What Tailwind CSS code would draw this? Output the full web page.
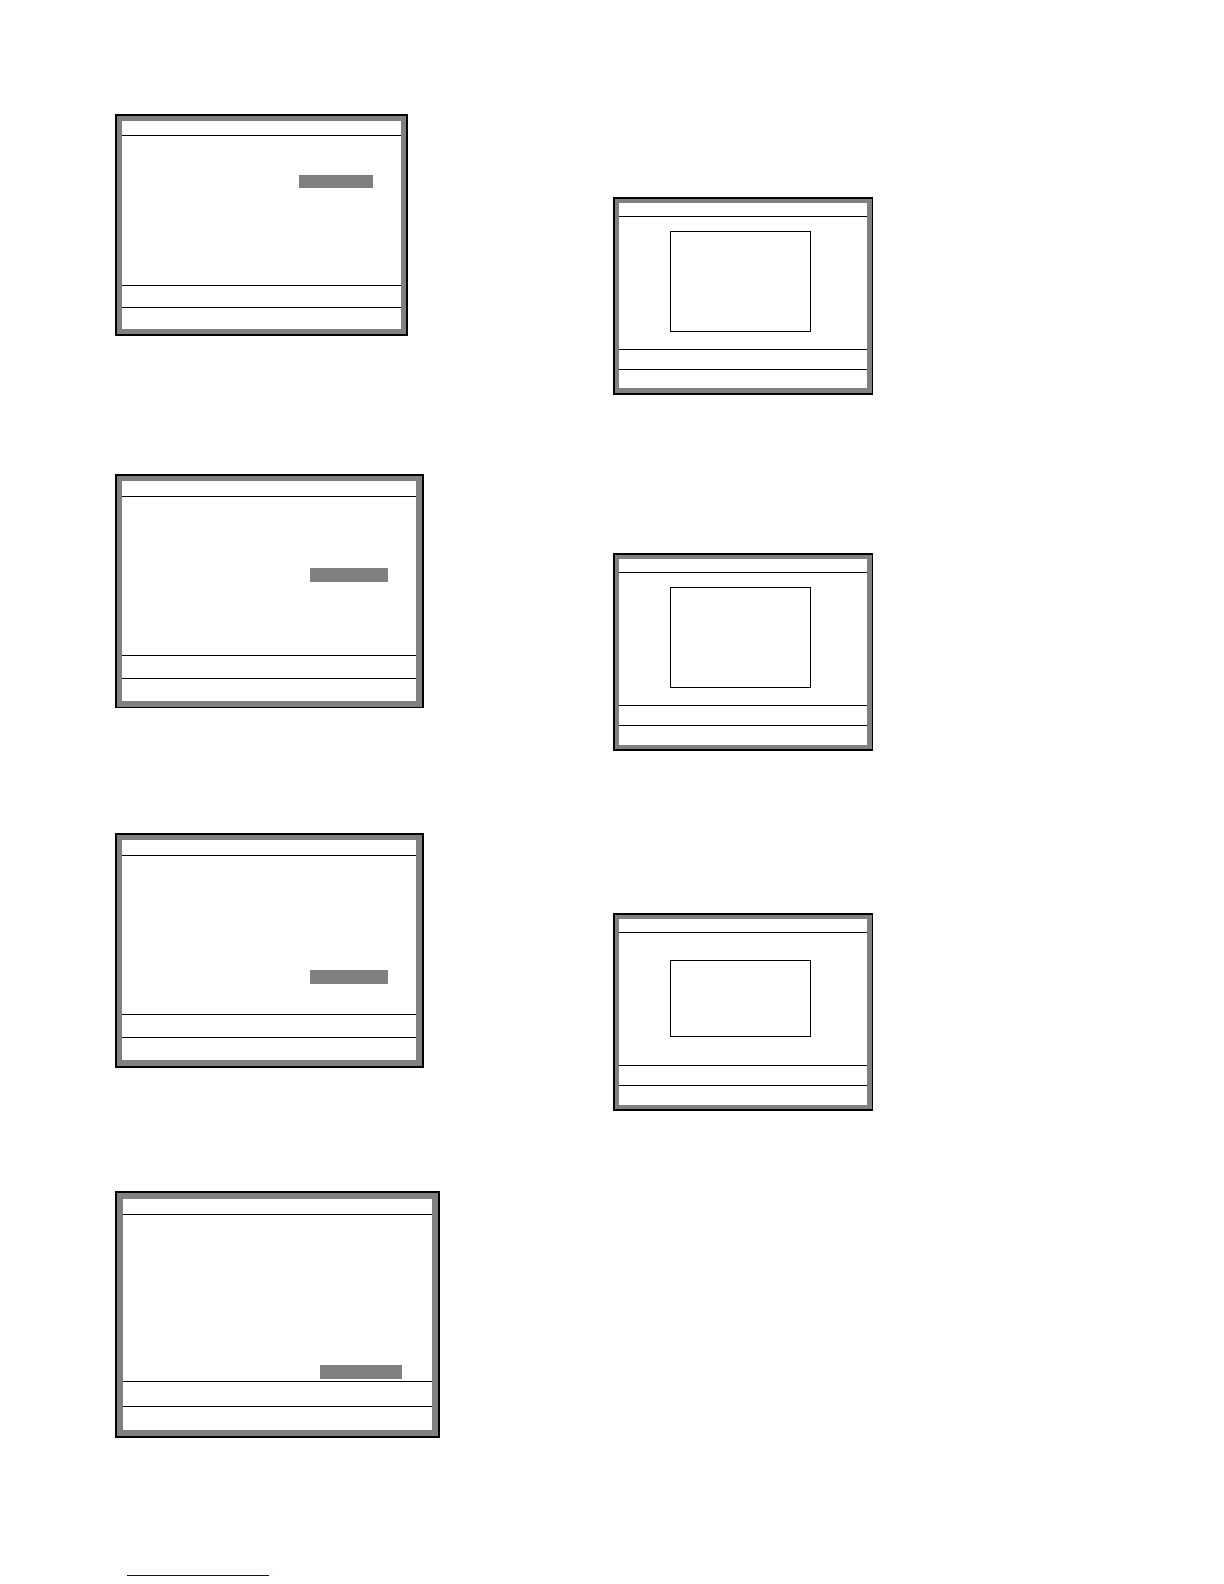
<!DOCTYPE html>
<html lang="en">
<head>
    <meta charset="UTF-8">
    <meta name="viewport" content="width=device-width, initial-scale=1.0">
    <title>Menu screens</title>
    <script src="https://cdn.jsdelivr.net/npm/@tailwindcss/browser@4"></script>
</head>
<body class="bg-white">
    <main class="grid grid-cols-2 items-start pt-[114px] pl-[115px] pr-[113px]">
        <!-- Menus with a highlighted entry -->
        <div class="flex flex-col">
            <section class="w-full max-w-[293px] border-2 border-black bg-[#808080] p-[5px]">
                <div class="bg-white divide-y divide-black">
                    <div class="h-[15px]"></div>
                    <div class="h-[150px] flex justify-end items-start pt-[39px] pr-7">
                        <div class="w-[74px] h-[13px] bg-[#808080]"></div>
                    </div>
                    <div class="h-[22px]"></div>
                    <div class="h-[21px]"></div>
                </div>
            </section>

            <section class="mt-[138px] w-full max-w-[309px] border-2 border-b border-black bg-[#808080] pt-[5px] pl-[5px] pr-[6px] pb-[6px]">
                <div class="bg-white divide-y divide-black">
                    <div class="h-4"></div>
                    <div class="h-[159px] flex justify-end items-start pt-[71px] pr-7">
                        <div class="w-[78px] h-[14px] bg-[#808080]"></div>
                    </div>
                    <div class="h-[23px]"></div>
                    <div class="h-[22px]"></div>
                </div>
            </section>

            <section class="mt-[125px] w-full max-w-[309px] border-2 border-black bg-[#808080] pt-[5px] pl-[5px] pr-[6px] pb-[6px]">
                <div class="bg-white divide-y divide-black">
                    <div class="h-4"></div>
                    <div class="h-[159px] flex justify-end items-start pt-[114px] pr-7">
                        <div class="w-[78px] h-[14px] bg-[#808080]"></div>
                    </div>
                    <div class="h-[23px]"></div>
                    <div class="h-[22px]"></div>
                </div>
            </section>

            <section class="mt-[123px] w-full max-w-[325px] border-2 border-black bg-[#808080] p-[6px]">
                <div class="bg-white divide-y divide-black">
                    <div class="h-4"></div>
                    <div class="h-[167px] flex justify-end items-start pt-[150px] pr-[30px]">
                        <div class="w-[82px] h-[14px] bg-[#808080]"></div>
                    </div>
                    <div class="h-[25px]"></div>
                    <div class="h-[23px]"></div>
                </div>
            </section>
        </div>

        <!-- Screens with a message box -->
        <div class="flex flex-col pt-[83px]">
            <section class="w-full max-w-[260px] border-2 border-r border-black bg-[#808080] pt-1 pl-1 pr-[5px] pb-[5px]">
                <div class="bg-white divide-y divide-black">
                    <div class="h-[14px]"></div>
                    <div class="h-[133px] pt-[14px] pl-[51px] pr-14">
                        <div class="h-[101px] border border-black"></div>
                    </div>
                    <div class="h-5"></div>
                    <div class="h-[18px]"></div>
                </div>
            </section>

            <section class="mt-[158px] w-full max-w-[260px] border-2 border-r border-black bg-[#808080] pt-1 pl-1 pr-[5px] pb-1">
                <div class="bg-white divide-y divide-black">
                    <div class="h-[14px]"></div>
                    <div class="h-[133px] pt-[14px] pl-[51px] pr-14">
                        <div class="h-[101px] border border-black"></div>
                    </div>
                    <div class="h-5"></div>
                    <div class="h-[19px]"></div>
                </div>
            </section>

            <section class="mt-[162px] w-full max-w-[260px] border-2 border-r border-black bg-[#808080] pt-1 pl-1 pr-[5px] pb-1">
                <div class="bg-white divide-y divide-black">
                    <div class="h-[14px]"></div>
                    <div class="h-[133px] pt-[27px] pl-[51px] pr-14">
                        <div class="h-[77px] border border-black"></div>
                    </div>
                    <div class="h-5"></div>
                    <div class="h-[19px]"></div>
                </div>
            </section>
        </div>
    </main>

    <footer class="pt-[121px] pl-[127px] pb-2">
        <a href="#" aria-label="Back to top" class="block w-[142px] h-[17px] border-b border-b-[#080888]"></a>
    </footer>
</body>
</html>
